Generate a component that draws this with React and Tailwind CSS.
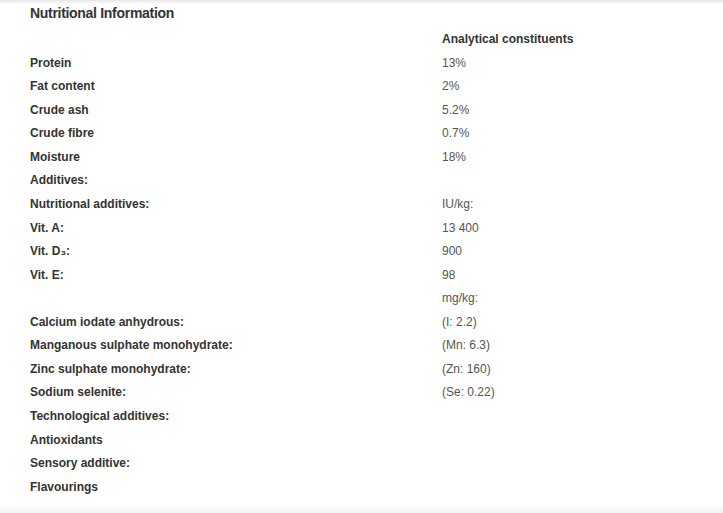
import React from 'react';

const rows = [
  ['Protein', '13%'],
  ['Fat content', '2%'],
  ['Crude ash', '5.2%'],
  ['Crude fibre', '0.7%'],
  ['Moisture', '18%'],
  ['Additives:', ''],
  ['Nutritional additives:', 'IU/kg:'],
  ['Vit. A:', '13 400'],
  ['Vit. D₃:', '900'],
  ['Vit. E:', '98'],
  ['', 'mg/kg:'],
  ['Calcium iodate anhydrous:', '(I: 2.2)'],
  ['Manganous sulphate monohydrate:', '(Mn: 6.3)'],
  ['Zinc sulphate monohydrate:', '(Zn: 160)'],
  ['Sodium selenite:', '(Se: 0.22)'],
  ['Technological additives:', ''],
  ['Antioxidants', ''],
  ['Sensory additive:', ''],
  ['Flavourings', ''],
];

const App = () => {
  return (
    <div className="w-[723px] h-[513px] bg-white overflow-hidden flex flex-col" style={{ fontFamily: '"Liberation Sans", Arial, sans-serif' }}>
      <div className="h-[4px] bg-gradient-to-b from-[#e6e6e6] to-white" />
      <div className="flex-1 px-[30px]">
        <h2 className="text-[14px] font-bold text-[#333] leading-[18px] tracking-[-0.3px]">Nutritional Information</h2>
        <div className="mt-[6px] grid grid-cols-[412px_1fr] text-[12px] leading-[23.56px]">
          <div />
          <div className="font-bold text-[#333]">Analytical constituents</div>
          {rows.map(([label, value], i) => (
            <React.Fragment key={i}>
              <div className="font-bold text-[#333]">{label}</div>
              <div className="text-[#555]">{value}</div>
            </React.Fragment>
          ))}
        </div>
      </div>
      <div className="h-[10px] bg-gradient-to-b from-white to-[#f3f3f3]" />
    </div>
  );
};

export default App;
